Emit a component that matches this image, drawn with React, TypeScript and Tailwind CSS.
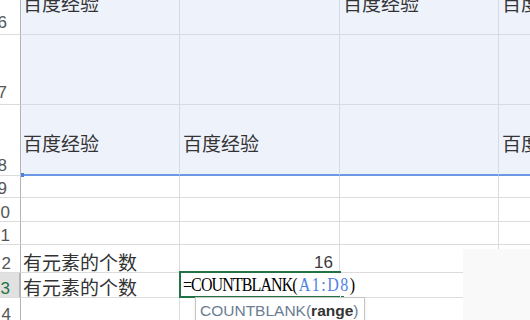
import React from 'react';

type Row = {
  num: string;
  h: string;
  numPad: string;
  cellPad: string;
  cells: string[];
  tint?: boolean;
  active?: boolean;
};

const rows: Row[] = [
  { num: '16', h: 'h-[71px]', numPad: 'pr-[10px] pb-[3px]', cellPad: 'pb-[22px]', cells: ['百度经验', '', '百度经验', '百度经验'], tint: true },
  { num: '17', h: 'h-[70px]', numPad: 'pr-[10px] pb-[3px]', cellPad: 'pb-[22px]', cells: ['', '', '', ''], tint: true },
  { num: '18', h: 'h-[71px]', numPad: 'pr-[10px] pb-[1px]', cellPad: 'pb-[22px]', cells: ['百度经验', '百度经验', '', '百度经验'], tint: true },
  { num: '19', h: 'h-[22px]', numPad: 'pr-[10px]', cellPad: '', cells: ['', '', '', ''] },
  { num: '20', h: 'h-[24px]', numPad: 'pr-[7px]', cellPad: '', cells: ['', '', '', ''] },
  { num: '21', h: 'h-[23px]', numPad: 'pr-[7px]', cellPad: '', cells: ['', '', '', ''] },
  { num: '22', h: 'h-[28px]', numPad: 'pr-[6px]', cellPad: 'pb-[1px]', cells: ['有元素的个数', '16', '', ''] },
  { num: '23', h: 'h-[25px]', numPad: 'pr-[6px]', cellPad: 'pb-[1px]', cells: ['有元素的个数', '', '', ''], active: true },
  { num: '24', h: 'h-[26px]', numPad: 'pr-[6px]', cellPad: '', cells: ['', '', '', ''] },
];

const colW = ['w-[159px] pl-[2px]', 'w-[160px] pl-[3px]', 'w-[159px] pl-[3px]', 'flex-1 pl-[3px]'];

function Cell({ row, col }: { row: Row; col: number }) {
  const text = row.cells[col];
  const isNumber = /^\d+$/.test(text);
  const tintCls = row.tint ? 'bg-[#eef2fb] border-[#d6dbe6]' : 'bg-white border-[#dcdcdc]';
  const bottom = row.num === '18' ? 'border-b-2 border-b-[#6a97e6]' : 'border-b';
  const right = col < 3 ? 'border-r' : '';
  return (
    <div
      className={`relative flex shrink-0 items-end whitespace-nowrap ${colW[col]} ${tintCls} ${bottom} ${right} ${row.cellPad} ${
        isNumber ? 'justify-end pr-[6px]' : ''
      }`}
    >
      {isNumber ? (
        <span className="font-['Liberation_Sans',sans-serif] text-[17px] leading-none text-[#3c3c3c]">{text}</span>
      ) : (
        <span className="text-[19px] leading-none text-[#333]">{text}</span>
      )}
      {row.active && col === 1 && <ActiveCell />}
    </div>
  );
}

function ActiveCell() {
  return (
    <div className="absolute -left-px -top-[2px] z-10 flex h-[27px] w-[162px] items-center border-2 border-r-0 border-[#217346] pl-[2px]">
      {/* edit text runs past the cell and hides its right edge */}
      <div className="flex h-[19px] scale-y-[1.15] items-center bg-white pr-[2px] font-['Liberation_Serif',serif] text-[16px] leading-none text-black">
        <span className="tracking-[-0.9px]">=COUNTBLANK(</span>
        <span className="pl-[2px] tracking-[1.5px] text-[#4f82e3]">A1:D8</span>
        <span>)</span>
      </div>
      <span className="absolute -bottom-[4px] right-[-4px] h-[5px] w-[5px] border border-white bg-[#217346]" />
    </div>
  );
}

export default function App() {
  return (
    <div className="relative h-[320px] w-[530px] overflow-hidden bg-white font-['Noto_Sans_CJK_SC',sans-serif]">
      <div className="-mt-[36px] flex flex-col">
        {rows.map(row => (
          <div key={row.num} className={`flex ${row.h}`}>
            <div
              className={`relative flex w-[21px] shrink-0 items-end justify-end overflow-hidden border-b border-r border-b-[#dcdcdc] border-r-[#b4b4b4] font-['Liberation_Sans',sans-serif] text-[17px] leading-none tracking-[3px] ${row.numPad} ${
                row.active ? 'border-r-2 border-r-[#217346] bg-[#e1e1e1] text-[#217346]' : 'bg-white text-[#555]'
              }`}
            >
              {row.num}
            </div>
            {row.cells.map((_, i) => (
              <Cell key={i} row={row} col={i} />
            ))}
          </div>
        ))}
      </div>

      {/* small grip at the left end of the blue row line */}
      <div className="absolute left-[21px] top-[173px] h-[4px] w-[3px] bg-[#4d7fdc]" />

      {/* function hint under the edited cell */}
      <div className="absolute left-[195px] top-[297px] z-30 h-[30px] w-[170px] border border-[#c6c6c6] bg-white px-[4px] pt-[5px] font-['Liberation_Sans',sans-serif] text-[15.5px] leading-none text-[#6a7d92] shadow-sm">
        COUNTBLANK(<span className="font-bold text-[#333]">range</span>)
      </div>

      {/* faded patch in the lower right corner */}
      <div className="absolute bottom-0 left-[463px] right-0 top-[249px] z-20 bg-[#f9f9f9]" />
    </div>
  );
}
